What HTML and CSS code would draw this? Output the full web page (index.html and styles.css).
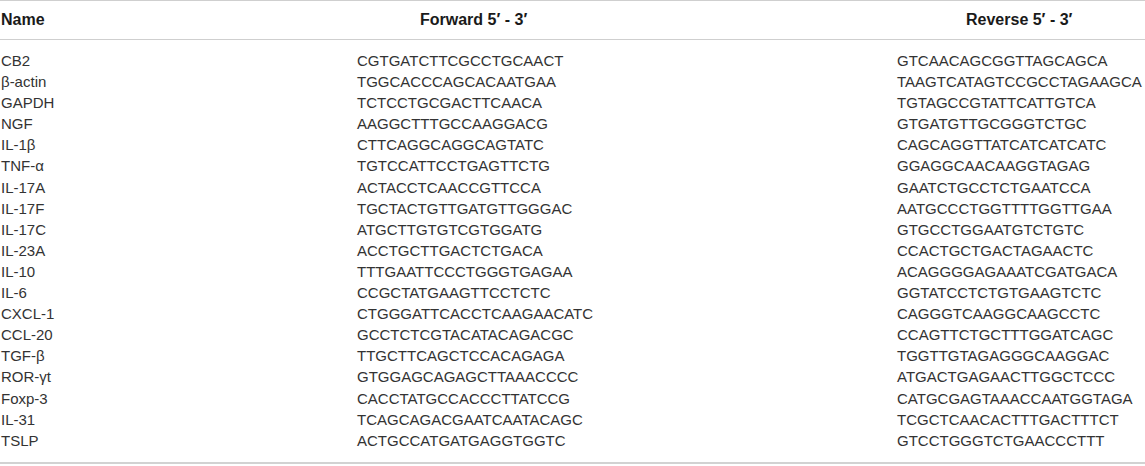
FILE: index.html
```html
<!DOCTYPE html>
<html>
<head>
<meta charset="utf-8">
<link rel="stylesheet" href="styles.css">
</head>
<body>
<div class="table">
  <div class="row head">
    <div class="cell">Name</div>
    <div class="cell fwd-h">Forward 5′ - 3′</div>
    <div class="cell rev-h">Reverse 5′ - 3′</div>
  </div>
  <div class="body">
    <div class="row"><div class="cell">CB2</div><div class="cell">CGTGATCTTCGCCTGCAACT</div><div class="cell">GTCAACAGCGGTTAGCAGCA</div></div>
    <div class="row"><div class="cell">β-actin</div><div class="cell">TGGCACCCAGCACAATGAA</div><div class="cell">TAAGTCATAGTCCGCCTAGAAGCA</div></div>
    <div class="row"><div class="cell">GAPDH</div><div class="cell">TCTCCTGCGACTTCAACA</div><div class="cell">TGTAGCCGTATTCATTGTCA</div></div>
    <div class="row"><div class="cell">NGF</div><div class="cell">AAGGCTTTGCCAAGGACG</div><div class="cell">GTGATGTTGCGGGTCTGC</div></div>
    <div class="row"><div class="cell">IL-1β</div><div class="cell">CTTCAGGCAGGCAGTATC</div><div class="cell">CAGCAGGTTATCATCATCATC</div></div>
    <div class="row"><div class="cell">TNF-α</div><div class="cell">TGTCCATTCCTGAGTTCTG</div><div class="cell">GGAGGCAACAAGGTAGAG</div></div>
    <div class="row"><div class="cell">IL-17A</div><div class="cell">ACTACCTCAACCGTTCCA</div><div class="cell">GAATCTGCCTCTGAATCCA</div></div>
    <div class="row"><div class="cell">IL-17F</div><div class="cell">TGCTACTGTTGATGTTGGGAC</div><div class="cell">AATGCCCTGGTTTTGGTTGAA</div></div>
    <div class="row"><div class="cell">IL-17C</div><div class="cell">ATGCTTGTGTCGTGGATG</div><div class="cell">GTGCCTGGAATGTCTGTC</div></div>
    <div class="row"><div class="cell">IL-23A</div><div class="cell">ACCTGCTTGACTCTGACA</div><div class="cell">CCACTGCTGACTAGAACTC</div></div>
    <div class="row"><div class="cell">IL-10</div><div class="cell">TTTGAATTCCCTGGGTGAGAA</div><div class="cell">ACAGGGGAGAAATCGATGACA</div></div>
    <div class="row"><div class="cell">IL-6</div><div class="cell">CCGCTATGAAGTTCCTCTC</div><div class="cell">GGTATCCTCTGTGAAGTCTC</div></div>
    <div class="row"><div class="cell">CXCL-1</div><div class="cell">CTGGGATTCACCTCAAGAACATC</div><div class="cell">CAGGGTCAAGGCAAGCCTC</div></div>
    <div class="row"><div class="cell">CCL-20</div><div class="cell">GCCTCTCGTACATACAGACGC</div><div class="cell">CCAGTTCTGCTTTGGATCAGC</div></div>
    <div class="row"><div class="cell">TGF-β</div><div class="cell">TTGCTTCAGCTCCACAGAGA</div><div class="cell">TGGTTGTAGAGGGCAAGGAC</div></div>
    <div class="row"><div class="cell">ROR-γt</div><div class="cell">GTGGAGCAGAGCTTAAACCCC</div><div class="cell">ATGACTGAGAACTTGGCTCCC</div></div>
    <div class="row"><div class="cell">Foxp-3</div><div class="cell">CACCTATGCCACCCTTATCCG</div><div class="cell">CATGCGAGTAAACCAATGGTAGA</div></div>
    <div class="row"><div class="cell">IL-31</div><div class="cell">TCAGCAGACGAATCAATACAGC</div><div class="cell">TCGCTCAACACTTTGACTTTCT</div></div>
    <div class="row"><div class="cell">TSLP</div><div class="cell">ACTGCCATGATGAGGTGGTC</div><div class="cell">GTCCTGGGTCTGAACCCTTT</div></div>
  </div>
</div>
</body>
</html>
```
FILE: styles.css
```css
html, body {
  margin: 0;
  padding: 0;
  background: #ffffff;
}

.table {
  width: 1145px;
  font-family: "Liberation Sans", Arial, sans-serif;
  color: #333333;
  border-top: 1px solid #cfcfcf;
  border-bottom: 2px solid #d2d2d2;
  box-sizing: border-box;
}

.row {
  display: grid;
  grid-template-columns: 356px 540px 1fr;
  padding-left: 1px;
  font-size: 15px;
  line-height: 21.1px;
  white-space: nowrap;
}

.head {
  font-size: 16px;
  font-weight: bold;
  color: #1a1a1a;
  line-height: 38px;
  border-bottom: 1px solid #cfcfcf;
}

.fwd-h {
  padding-left: 63px;
}

.rev-h {
  padding-left: 69px;
}

.body {
  padding-top: 10px;
  padding-bottom: 11px;
}
```
